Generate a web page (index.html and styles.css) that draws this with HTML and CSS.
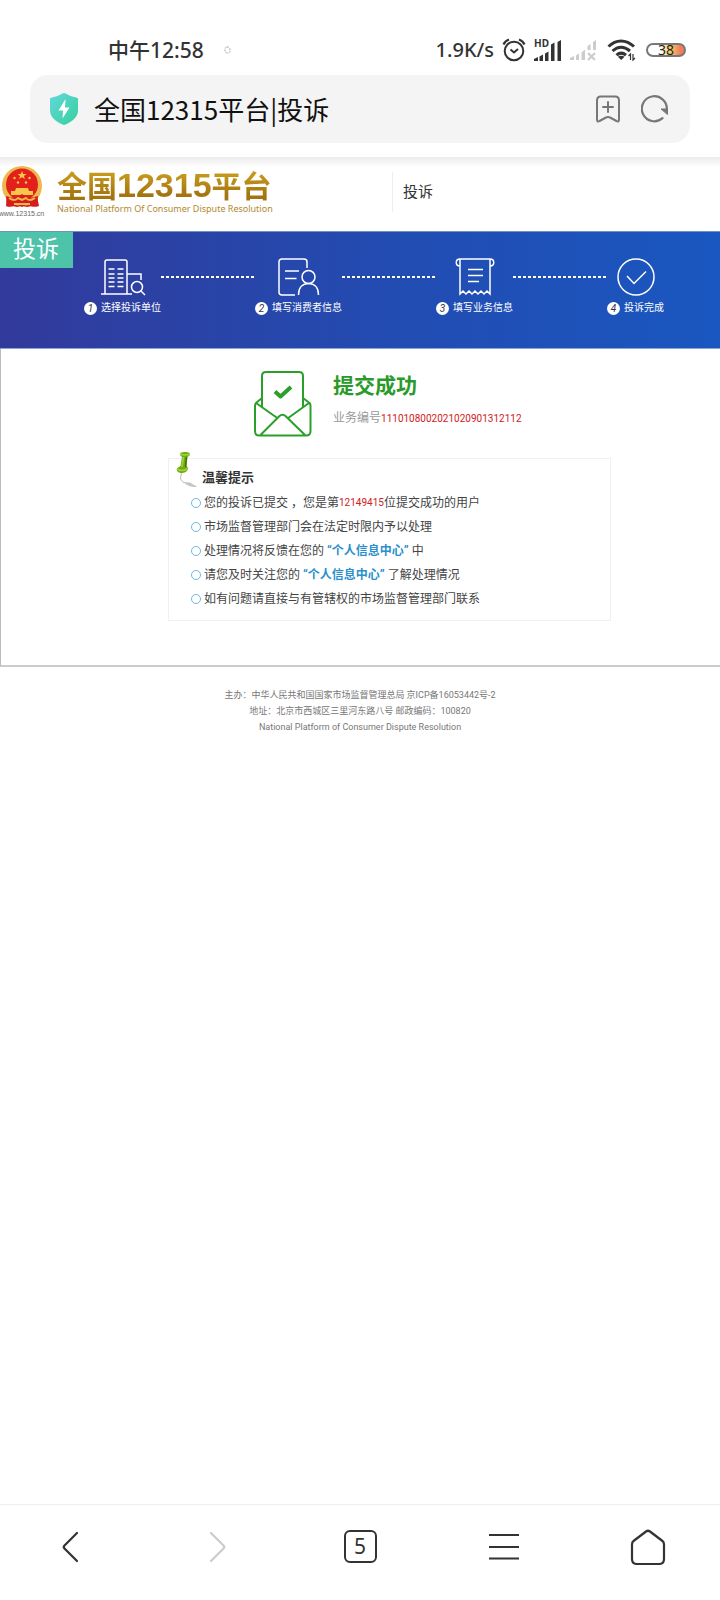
FILE: index.html
```html
<!DOCTYPE html>
<html lang="zh-CN">
<head>
<meta charset="utf-8">
<meta name="viewport" content="width=device-width, initial-scale=1">
<title>全国12315平台|投诉</title>
<link rel="stylesheet" href="styles.css">
</head>
<body>
<div class="screen">
  <div class="status-bar">
    <span class="clock">中午12:58</span>
    <svg class="spinner" width="8" height="8" viewBox="0 0 8 8" fill="none" stroke="#aaa" stroke-dasharray="2 1"><rect x="1" y="1" width="5" height="6" rx="2"/></svg>
    <div class="indicators">
      <span class="speed">1.9K/s</span>
      <svg width="24" height="24" viewBox="0 0 24 24" fill="none" stroke="#333" stroke-width="2"><circle cx="12" cy="13" r="9.300"/><path d="M1.500 6.500C2.500 4 4.500 2.300 7 1.500M22.500 6.500C21.500 4 19.500 2.300 17 1.500" stroke-width="2.200"/><path d="M8.500 11.500L12 14.500L16 11"/></svg>
      <svg class="hd-signal" width="28" height="26" viewBox="0 -2 28 26" fill="#333"><text class="hd" x="0" y="8">HD</text><path d="M0 22V20L4 18V22ZM5.500 17.500L9 15.500V22H5.500ZM11 14.500L14.500 12.500V22H11ZM17 5.500L20.500 3.500V22H17ZM23.500 3L27 1V22H23.500Z"/></svg>
      <svg width="28" height="24" viewBox="0 0 28 24" fill="#ccc"><path d="M0 22V20L4 18V22ZM6 17.500L9 15.500V22H6ZM11.500 14.500L15 11.500V22H11.500ZM17.500 8L20.500 6V12H17.500ZM23 4L26 2V12H23Z"/><path d="M18 15L25 22M25 15L18 22" stroke="#ccc" stroke-width="2.200"/></svg>
      <svg width="32" height="24" viewBox="0 0 32 24" fill="none" stroke="#333" stroke-width="3"><path d="M2.500 8.500C10 1 20 1 28 8.500M6.500 13C12 8 18 8 24 13M10.500 17.200C13.500 14.600 17 14.600 20 17.200"/><path d="M11.800 18.800Q15.200 16.500 18.600 18.800L15.200 22Z" fill="#333" stroke="none"/><path d="M24.500 22V16L22.500 18M27 16V22L29 20" stroke-width="1.200"/></svg>
      <span class="battery">38</span>
    </div>
  </div>

  <div class="address-row">
    <div class="address-bar">
      <svg width="28" height="34" viewBox="0 0 28 34"><defs><linearGradient id="shield" x1="0" y1="0" x2="1" y2="1"><stop offset="0" stop-color="#63d8dc"/><stop offset="1" stop-color="#35d09b"/></linearGradient></defs><path d="M14 1Q15 1 16 1.800Q21 5 27 5.800Q28 6 28 7V18C28 25 23 29 15.500 32.500Q14 33.300 12.500 32.500C5 29 0 25 0 18V7Q0 6 1 5.800Q7 5 12 1.800Q13 1 14 1Z" fill="url(#shield)"/><path d="M15.500 7L8.500 18.500H13L12.500 26.500L19.500 15.500H15Z" fill="#fff"/></svg>
      <input class="address" type="text" aria-label="地址栏" value="全国12315平台|投诉">
      <button class="icon-button" type="button" aria-label="添加书签"><svg width="30" height="28" viewBox="0 0 30 28" fill="none" stroke="#777" stroke-width="2" stroke-linecap="round" stroke-linejoin="round"><path d="M6 1.500H20Q24 1.500 24 5.500V24.500Q24 27.500 21.500 26L15 22.500Q13 21.500 11 22.500L4.500 26Q2 27.500 2 24.500V5.500Q2 1.500 6 1.500ZM13 7V17M8 12H18"/></svg></button>
      <button class="icon-button" type="button" aria-label="刷新"><svg width="30" height="28" viewBox="0 0 30 28" fill="none" stroke="#777" stroke-width="2.200"><path d="M21.500 23.200A12.500 12.500 0 1 1 25.800 14.500" stroke-linecap="round"/><path d="M20 14H26.500V19.500Z" fill="#777" stroke="#777" stroke-width="1"/></svg></button>
    </div>
  </div>

  <header class="site-header">
    <div class="brand">
      <div class="seal">
        <svg width="42" height="42" viewBox="0 0 42 42"><path d="M6 30H36L38 40Q34 42 31 39Q26 43 21 39Q16 43 11 39Q8 42 5 40Z" fill="#d71c1c"/><circle cx="21" cy="20" r="20" fill="#edb84d"/><circle cx="21" cy="18.500" r="16" fill="#e2211c"/><path d="M21 5l1.300 3h3.200l-2.600 2 1 3-2.900-1.800-2.900 1.800 1-3-2.600-2h3.200Z" fill="#f7c64b"/><g fill="#f7c64b"><circle cx="13.500" cy="12" r="1.200"/><circle cx="28.500" cy="12" r="1.200"/><circle cx="17" cy="16.500" r="1.200"/><circle cx="25" cy="16.500" r="1.200"/><path d="M15 22H27L28 25H32V29H10V25H14Z"/></g><path d="M5 30Q13 33 17 31L21 28L25 31Q29 33 37 30L36 40Q31 42 26 39L21 41L16 39Q11 42 6 40Z" fill="#d71c1c"/><path d="M8 32Q14 36 17 32L21 34L25 32Q28 36 34 32M13 38H29" stroke="#edb84d" stroke-width="2" fill="none"/></svg>
        <span class="seal-url">www.12315.cn</span>
      </div>
      <div class="wordmark">
        <h1 class="brand-name">全国<span class="brand-digits">12315</span>平台</h1>
        <span class="brand-en">National Platform Of Consumer Dispute Resolution</span>
      </div>
    </div>
    <div class="section-name">投诉</div>
  </header>

  <section class="banner">
    <h2 class="tag">投诉</h2>
    <ol class="steps">
      <li class="step">
        <svg width="46" height="38" viewBox="0 0 46 38" fill="none" stroke="#fff" stroke-width="1.500"><path d="M1 36H32M5 36V4Q5 2 7 2H25Q27 2 27 4V36M27 16H41V22M8.500 11H14.500M17.500 11H23.500M8.500 16H14.500M17.500 16H23.500M8.500 20H14.500M17.500 20H23.500M8.500 24H14.500M17.500 24H23.500M8.500 28.500H14.500M17.500 28.500H23.500M41 33L45 37"/><circle cx="37" cy="29" r="5.500"/></svg>
        <span class="step-label"><i class="step-number">1</i>选择投诉单位</span>
      </li>
      <li class="link-line" aria-hidden="true"></li>
      <li class="step">
        <svg width="42" height="38" viewBox="0 0 42 38" fill="none" stroke="#fff" stroke-width="1.500"><path d="M17 37H4Q1 37 1 34V4Q1 1 4 1H26Q29 1 29 4V10M7 13H21M7 20.500H18.500M20.500 37C20.500 29 25 25.500 30.500 25.500S40.500 29 40.500 37"/><circle cx="30.500" cy="19" r="6.500"/></svg>
        <span class="step-label"><i class="step-number">2</i>填写消费者信息</span>
      </li>
      <li class="link-line" aria-hidden="true"></li>
      <li class="step">
        <svg width="40" height="38" viewBox="0 0 40 38" fill="none" stroke="#fff" stroke-width="1.500"><path d="M5 8C0 8 0 1 5 1H35C40 1 40 8 35 8M5 1V36L8 33L11 36L14 33L17 36L20 33L23 36L26 33L29 36L32 33L35 36V1M13 11.500H28M13 17.500H28M13 23.500H24"/></svg>
        <span class="step-label"><i class="step-number">3</i>填写业务信息</span>
      </li>
      <li class="link-line" aria-hidden="true"></li>
      <li class="step">
        <svg width="38" height="38" viewBox="0 0 38 38" fill="none" stroke="#fff" stroke-width="1.500"><circle cx="19" cy="19" r="18"/><path d="M10 18L17 25.500L29 13.500"/></svg>
        <span class="step-label"><i class="step-number">4</i>投诉完成</span>
      </li>
    </ol>
  </section>

  <main class="panel">
    <div class="result">
      <svg width="58" height="66" viewBox="0 0 58 66" fill="none" stroke="#2aa02a" stroke-width="2" stroke-linejoin="round"><path d="M8 36V5Q8 1 12 1H45Q49 1 49 5V36M8 27L2 32Q1 33 1 35V60Q1 64.500 5 64.500H52Q56.500 64.500 56.500 60V35Q56.500 33 55.500 32L49 27M2 32L24 47.500M55 32L33.500 47.500M6.500 64L25 45.500Q28.500 42 32 45.500L51 64"/><path d="M21 20.500L26.500 25.500L37 16" stroke-width="4"/></svg>
      <div class="result-text">
        <h2 class="result-title">提交成功</h2>
        <p class="result-id">业务编号<span class="number">1110108002021020901312112</span></p>
      </div>
    </div>
    <section class="tips">
      <svg class="pin" width="22" height="36" viewBox="0 0 22 36"><path d="M7 30L14 30.500Q16 32 21 34.500Q17 36 11 33Z" fill="#c4c4c4"/><path d="M5.500 20L4.500 27L8 31" fill="none" stroke="#bbb"/><path d="M4 2Q4 0 9 0T14 2Q14 4 11.500 5L10.500 14Q13 16 11 19Q8 22 3 20.500Q0 19 1 16.500Q2 15 4.500 14L6 5Q4 4 4 2Z" fill="#6fac13"/><path d="M4 2Q9 4 14 2M1 17Q6 20 11 17" stroke="#a4d43a" stroke-width="1.500" fill="none"/><path d="M7.500 5L6 15" stroke="#a4d43a" stroke-width="1.500"/><path d="M10.500 5L9.500 15" stroke="#3f7410" stroke-width="1.500"/></svg>
      <h3 class="tips-title">温馨提示</h3>
      <ul class="tips-list">
        <li>您的投诉已提交 ，您是第<span class="number">12149415</span>位提交成功的用户</li>
        <li>市场监督管理部门会在法定时限内予以处理</li>
        <li>处理情况将反馈在您的 <a href="#center">“个人信息中心”</a> 中</li>
        <li>请您及时关注您的 <a href="#center">“个人信息中心”</a> 了解处理情况</li>
        <li>如有问题请直接与有管辖权的市场监督管理部门联系</li>
      </ul>
    </section>
  </main>

  <footer class="site-footer">
    <p>主办：中华人民共和国国家市场监督管理总局 京ICP备16053442号-2</p>
    <p>地址：北京市西城区三里河东路八号 邮政编码：100820</p>
    <p>National Platform of Consumer Dispute Resolution</p>
  </footer>

  <nav class="toolbar">
    <button type="button" aria-label="后退"><svg width="36" height="36" viewBox="0 0 36 36" fill="none" stroke="#333" stroke-width="2.200" stroke-linecap="round" stroke-linejoin="round"><path d="M23 4L10.500 16.500Q9 18 10.500 19.500L23 32"/></svg></button>
    <button type="button" aria-label="前进"><svg width="36" height="36" viewBox="0 0 36 36" fill="none" stroke="#ccc" stroke-width="2.200" stroke-linecap="round" stroke-linejoin="round"><path d="M13 4L25.500 16.500Q27 18 25.500 19.500L13 32"/></svg></button>
    <button type="button" aria-label="标签页 5"><span class="tab-count">5</span></button>
    <button type="button" aria-label="菜单"><svg width="36" height="36" viewBox="0 0 36 36" stroke="#333" stroke-width="2.200"><path d="M3 6H33M3 18H33M3 29.500H33"/></svg></button>
    <button type="button" aria-label="主页"><svg width="36" height="36" viewBox="0 0 36 36" fill="none" stroke="#333" stroke-width="2.200" stroke-linejoin="round"><path d="M16 2.500Q18 1 20 2.500L32.500 12Q34 13 34 15.500V30Q34 35 29 35H7Q2 35 2 30V15.500Q2 13 3.500 12Z"/></svg></button>
  </nav>
</div>
</body>
</html>
```

FILE: styles.css
```css
* {
  box-sizing: border-box;
}

body,
h1,
h2,
h3,
p,
ul,
ol {
  margin: 0;
  padding: 0;
}

body {
  background: #fff;
  color: #333;
  font-family: Roboto, "Noto Sans CJK SC", sans-serif;
}

ul,
ol {
  list-style: none;
}

svg {
  display: block;
  flex: none;
}

button {
  display: flex;
  align-items: center;
  justify-content: center;
  padding: 0;
  border: 0;
  background: none;
  color: inherit;
}

.screen {
  display: flex;
  flex-direction: column;
  min-height: 100vh;
}

/* Phone status bar */
.status-bar {
  display: flex;
  align-items: center;
  height: 75px;
  padding: 25px 34px 0 108px;
  font: 500 21px/30px "Noto Sans", "Noto Sans CJK SC", sans-serif;
}

.spinner {
  margin-left: 20px;
}

.indicators {
  display: flex;
  align-items: center;
  gap: 8px;
  margin-left: auto;
}

.speed {
  font-size: 20px;
}

.hd-signal {
  overflow: visible;
}

.hd {
  font: 700 10px "Noto Sans", sans-serif;
}

.battery {
  width: 40px;
  height: 14px;
  border: 2px solid #777;
  border-radius: 7px;
  background: linear-gradient(90deg, #fff 35%, #f6d264 60%, #f27c5c 90%);
  color: #222;
  font-size: 14px;
  font-weight: 400;
  line-height: 10px;
  text-align: center;
}

/* Browser address bar */
.address-row {
  padding: 0 30px 14px;
}

.address-bar {
  display: flex;
  align-items: center;
  gap: 16px;
  height: 68px;
  padding: 0 19px 0 20px;
  border-radius: 18px;
  background: #f4f4f4;
}

.address {
  flex: 1;
  min-width: 0;
  padding: 0;
  border: 0;
  outline: 0;
  background: none;
  color: #111;
  font: 26px/40px "Noto Sans CJK SC", sans-serif;
}

/* Site header */
.site-header {
  display: grid;
  grid-template-columns: 392px 1fr;
  align-items: center;
  height: 74px;
  padding-bottom: 4px;
  background: linear-gradient(#ebebeb, #fff 10px);
}

.brand {
  display: flex;
  gap: 14px;
}

.seal {
  display: flex;
  flex-direction: column;
  align-items: center;
  width: 43px;
  padding-top: 2px;
}

.seal-url {
  color: #666;
  font: 7px/12px "Liberation Sans", sans-serif;
}

.wordmark {
  padding-top: 2px;
}

.brand-name {
  background: linear-gradient(#c79a1d 20%, #a3740f 80%);
  background-clip: text;
  -webkit-background-clip: text;
  color: transparent;
  font: 700 30px/36px "Noto Sans CJK SC", sans-serif;
  white-space: nowrap;
}

.brand-digits {
  font-family: "Liberation Sans", sans-serif;
  font-size: 34px;
}

.brand-en {
  display: block;
  color: #b08a30;
  font: 9px/12px "Noto Sans", sans-serif;
  white-space: nowrap;
}

.section-name {
  padding-left: 10px;
  border-left: 1px solid #eee;
  font-size: 15px;
  line-height: 40px;
}

/* Progress banner */
.banner {
  position: relative;
  height: 118px;
  padding: 26px 56px 0 84px;
  border-top: 1px solid #6f92c4;
  border-bottom: 1px solid #8aa4d6;
  background: linear-gradient(90deg, #323a9b, #224cb2 55%, #1a57c0);
  color: #fff;
}

.tag {
  position: absolute;
  top: 0;
  left: 0;
  padding: 0 14px 0 13px;
  background: #4dc3a9;
  font-size: 23px;
  font-weight: 400;
  line-height: 36px;
}

.steps {
  display: flex;
}

.step {
  display: flex;
  flex-direction: column;
  align-items: center;
  gap: 5px;
}

.step-label {
  display: flex;
  align-items: center;
  gap: 4px;
  font-size: 10px;
  line-height: 14px;
  white-space: nowrap;
}

.step-number {
  width: 13px;
  height: 13px;
  border-radius: 50%;
  background: #fff;
  color: #334;
  line-height: 13px;
  text-align: center;
}

.link-line {
  flex: 1;
  height: 2px;
  margin-top: 18px;
  background: repeating-linear-gradient(90deg, #fff 0 3px, transparent 3px 5px);
}

/* Result panel */
.panel {
  padding: 22px 0 44px;
  border-bottom: 2px solid #ccc;
  border-left: 1px solid #bbb;
}

.result {
  display: flex;
  gap: 21px;
  padding-left: 253px;
}

.result-title {
  color: #2a9a2a;
  font-size: 21px;
  line-height: 30px;
}

.result-id {
  margin-top: 6px;
  color: #999;
  font-size: 12px;
  line-height: 22px;
}

.number {
  color: #d02020;
  font-size: 10px;
}

.tips {
  position: relative;
  width: 443px;
  max-width: 76%;
  margin: 21px 0 0 167px;
  padding: 7px 22px 9px;
  border: 1px solid #f0f0f0;
}

.pin {
  position: absolute;
  top: -7px;
  left: 7px;
}

.tips-title {
  padding-left: 11px;
  font-size: 13px;
  line-height: 24px;
}

.tips-list {
  padding-top: 1px;
  color: #444;
  font-size: 12px;
  line-height: 24px;
}

.tips-list li {
  display: flex;
  align-items: center;
  white-space: pre;
}

.tips-list li::before {
  content: "";
  width: 8px;
  height: 8px;
  margin-right: 3px;
  border: 1px solid #6cbbe6;
  border-radius: 50%;
}

.tips-list a {
  color: #2a8fcb;
  font-weight: 700;
  text-decoration: none;
}

/* Footer */
.site-footer {
  padding-top: 20px;
  color: #777;
  font-size: 9px;
  line-height: 16px;
  text-align: center;
}

/* Browser toolbar */
.toolbar {
  display: grid;
  grid-template-columns: repeat(5, 1fr);
  height: 96px;
  margin-top: auto;
  padding-bottom: 12px;
  border-top: 1px solid #eee;
}

.tab-count {
  width: 33px;
  height: 33px;
  border: 2px solid #333;
  border-radius: 6px;
  font: 21px/29px "Noto Sans", sans-serif;
  text-align: center;
}
```
